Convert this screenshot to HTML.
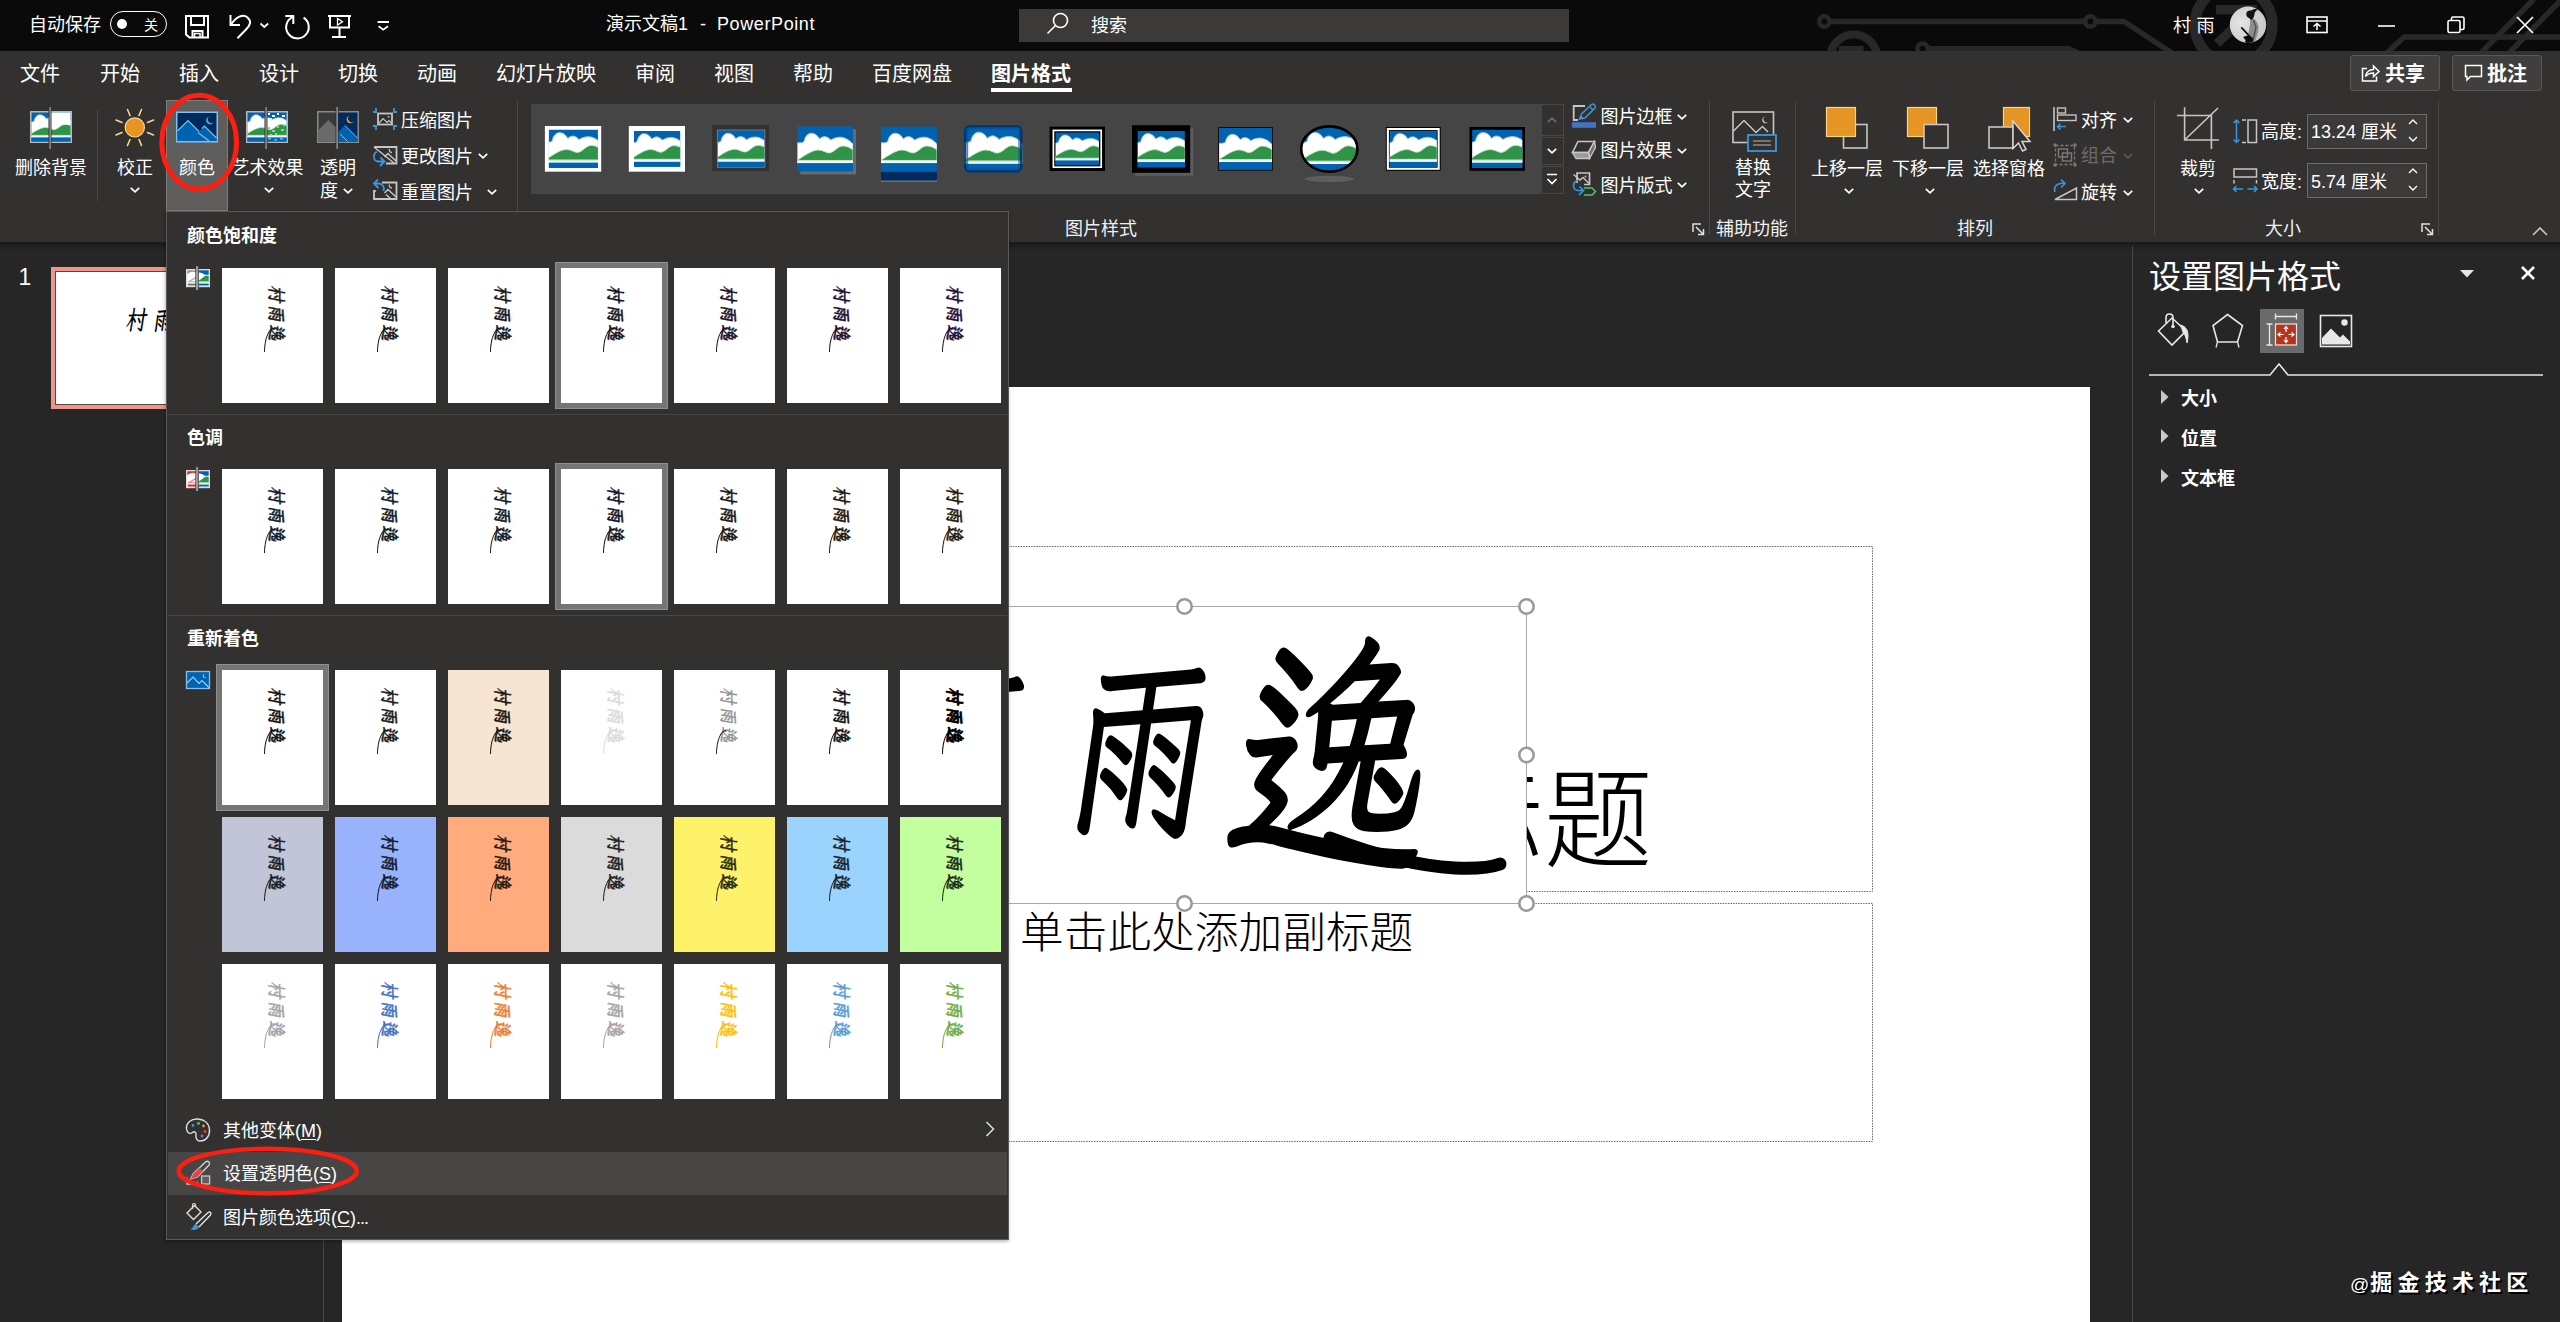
<!DOCTYPE html>
<html lang="zh-CN">
<head>
<meta charset="utf-8">
<title>演示文稿1 - PowerPoint</title>
<style>
*{box-sizing:border-box;margin:0;padding:0}
html,body{width:2560px;height:1322px;overflow:hidden;background:#262626}
body{position:relative;font-family:"Liberation Sans","Noto Sans CJK SC",sans-serif;color:#fff;font-size:18px;line-height:1}
.abs{position:absolute}
.t{position:absolute;white-space:nowrap;line-height:1;transform:translateY(calc(-50% + 1px))}
.tc{position:absolute;white-space:nowrap;line-height:1;transform:translate(-50%,calc(-50% + 1px))}
svg{position:absolute;overflow:visible}
#titlebar{position:absolute;left:0;top:0;width:2560px;height:51px;background:#0a0a0a;overflow:hidden}
#tabs{position:absolute;left:0;top:51px;width:2560px;height:46px;background:#323130}
#ribbon{position:absolute;left:0;top:97px;width:2560px;height:145px;background:#323130}
#ribshadow{position:absolute;left:0;top:242px;width:2560px;height:9px;background:linear-gradient(#191919,#262626)}
.tab{position:absolute;top:23px;font-size:20px;white-space:nowrap;line-height:1;transform:translateY(-50%);color:#fff}
.rl{position:absolute;white-space:nowrap;line-height:1;font-size:18px;transform:translate(-50%,calc(-50% + 1px));color:#fff}
.rs{position:absolute;white-space:nowrap;line-height:1;font-size:18px;transform:translateY(calc(-50% + 1px));color:#fff}
.gl{position:absolute;white-space:nowrap;line-height:1;font-size:18px;transform:translate(-50%,calc(-50% + 1px));color:#f0f0f0;top:228px}
.sep{position:absolute;width:1px;background:#4a4846;top:110px;height:91px}
.chev{position:absolute;width:11px;height:7px}
</style>
</head>
<body>
<div id="titlebar">
<svg width="2560" height="51" viewBox="0 0 2560 51" style="left:0;top:0" fill="none" stroke="#282828" stroke-width="5.500">
<path d="M1830 21.500H2085M2096 21.500H2124L2172 53"/>
<circle cx="1824.400" cy="21.500" r="5.200" stroke-width="4.500"/><circle cx="2090.400" cy="21.500" r="5.200" stroke-width="4.500"/>
<circle cx="1853.700" cy="58" r="23.500" stroke-width="8"/>
<rect x="1839" y="46" width="24.500" height="6" fill="#282828" stroke="none"/>
<circle cx="1922.600" cy="48.800" r="5.200" stroke-width="4.500"/><path d="M1928 48.800H2069L2078 53"/>
<circle cx="2233.600" cy="25" r="38.800" stroke-width="10.600"/>
<path d="M2216 9.600H2257M2253.500 9L2217 43.500" stroke-width="9.200"/>
<path d="M2386 54L2404 37H2560M2480 54L2534 -1M2508 54L2562 -1"/>
</svg>
<div class="t" style="left:29px;top:24px;font-size:18px">自动保存</div>
<div class="abs" style="left:110px;top:11px;width:57px;height:26px;border:1.5px solid #fff;border-radius:13px"></div>
<div class="abs" style="left:117px;top:19px;width:10px;height:10px;border-radius:5px;background:#fff"></div>
<div class="tc" style="left:151px;top:24px;font-size:14px">关</div>
<svg width="420" height="50" viewBox="0 0 420 50" style="left:0;top:0" fill="none" stroke="#fff" stroke-width="2">
<path d="M186 16H208V37.600H189.500L186 34.500Z"/><path d="M191 16V25H204V16M192.500 37.500V31H202.500V37.500"/><path d="M194.500 37V33.500H200V37" stroke-width="1.500"/>
<path d="M230.500 15V25H240"/><path d="M231 24.500C236 17 243 13.500 247.500 17.500C252 21.500 250 25.500 246 29.500L237.500 38.300"/>
<path d="M260.500 23.500L264.300 27L268.200 23.500" stroke-width="1.800"/>
<path d="M285.300 16H293.300V24"/><path d="M292.800 16.800A11.300 11.300 0 1 0 303.600 17.600"/>
<path d="M328 16H351M330 16V27.500H349V16M339.500 27.500V37M332 37H346"/><path d="M337.500 18.500V25L342.500 21.700Z" stroke-width="1.300"/>
<path d="M377.600 22H389M378.600 26.200L383.300 29.700L388 26.200" stroke-width="1.800"/>
</svg>
<div class="t" style="left:606px;top:23px;font-size:18px">演示文稿1</div><div class="t" style="left:700px;top:23px;font-size:18px">-</div><div class="t" style="left:717px;top:23px;font-size:18px;letter-spacing:0.600px">PowerPoint</div>
<div class="abs" style="left:1019px;top:9px;width:550px;height:33px;background:#3b3a39"></div>
<svg width="24" height="24" viewBox="0 0 24 24" style="left:1046px;top:12px" fill="none" stroke="#fff" stroke-width="1.6"><circle cx="14.500" cy="8.500" r="7"/><path d="M9.500 13.500L1.500 21.500"/></svg>
<div class="t" style="left:1091px;top:25px;font-size:18px">搜索</div>
<div class="t" style="left:2173px;top:25px;font-size:18px;letter-spacing:5.500px">村雨</div>
<svg width="40" height="40" viewBox="2228 4 40 40" style="left:2228px;top:4px"><defs><radialGradient id="av" cx="30%" cy="45%" r="80%"><stop offset="0" stop-color="#e4e4e4"/><stop offset="1" stop-color="#c4c4c4"/></radialGradient><clipPath id="avc"><circle cx="2248" cy="24.750" r="18.200"/></clipPath></defs><circle cx="2248" cy="24.750" r="18.200" fill="url(#av)"/><g clip-path="url(#avc)"><path d="M2252 17.500C2255.500 19 2258.500 23 2258.500 28C2258.500 33 2256 38 2254.500 43H2247.500C2249 38 2248 34 2249 30C2250 26 2250.500 22 2250 19Z" fill="#8c8c8c"/><path d="M2253.500 20L2256 27L2254 36L2252.500 43" stroke="#4a4a4a" stroke-width="1.200" fill="none"/><path d="M2246.300 14.500C2246 11.500 2248.500 10 2251 10.500C2253 9 2256 8.500 2258.500 9.500C2256 10.500 2254.500 12 2254.500 14C2254.500 16.500 2253 18.500 2251.500 20L2249 18C2247.500 17.500 2246.500 16.500 2246.300 14.500Z" fill="#141414"/><path d="M2241.300 27.400L2248.800 35.400" stroke="#0c0c0c" stroke-width="1.600"/><path d="M2243 37L2249 35L2253 38L2252.500 44H2245L2245.500 40Z" fill="#0c0c0c"/></g></svg>
<svg width="22" height="18" viewBox="0 0 22 18" style="left:2306px;top:16px" fill="none" stroke="#fff" stroke-width="1.6"><rect x="1" y="1" width="20" height="15.500"/><path d="M1 5H21M11 14V7.500M7.500 10.500L11 7.500L14.500 10.500"/></svg>
<svg width="18" height="4" viewBox="0 0 18 4" style="left:2378px;top:24px" stroke="#fff" stroke-width="1.6"><path d="M0 2H17"/></svg>
<svg width="18" height="18" viewBox="0 0 18 18" style="left:2447px;top:16px" fill="none" stroke="#fff" stroke-width="1.6"><rect x="1" y="4.500" width="12" height="12" rx="1.500"/><path d="M4.500 4.500V2.500Q4.500 1 6 1H15.500Q17 1 17 2.500V12Q17 13.500 15.500 13.500H13"/></svg>
<svg width="18" height="18" viewBox="0 0 18 18" style="left:2516px;top:16px" fill="none" stroke="#fff" stroke-width="1.7"><path d="M1 1L17 17M17 1L1 17"/></svg>
</div>
<div id="tabs">
<div class="tab" style="left:20px">文件</div>
<div class="tab" style="left:100px">开始</div>
<div class="tab" style="left:179px">插入</div>
<div class="tab" style="left:259px">设计</div>
<div class="tab" style="left:338px">切换</div>
<div class="tab" style="left:417px">动画</div>
<div class="tab" style="left:496px">幻灯片放映</div>
<div class="tab" style="left:635px">审阅</div>
<div class="tab" style="left:714px">视图</div>
<div class="tab" style="left:793px">帮助</div>
<div class="tab" style="left:872px">百度网盘</div>
<div class="tab" style="left:991px;font-weight:700">图片格式</div>
<div class="abs" style="left:991px;top:37px;width:81px;height:4px;background:#fff"></div>
<div class="abs" style="left:2350px;top:4px;width:90px;height:36px;background:#413f3e;border:1px solid #5a5857;border-radius:3px"></div>
<div class="abs" style="left:2452px;top:4px;width:90px;height:36px;background:#413f3e;border:1px solid #5a5857;border-radius:3px"></div>
<svg width="20" height="20" viewBox="0 0 20 20" style="left:2361px;top:12px" fill="none" stroke="#fff" stroke-width="1.500"><path d="M6 5.500H1.500V18H15.500V13.500"/><path d="M4.500 13.500C5.500 8.500 9 6.500 12.500 6.500V3L18 8.500L12.500 13.500V10C9.500 10 6.500 11 4.500 13.500Z"/></svg>
<div class="t" style="left:2385px;top:22px;font-size:20px;font-weight:700">共享</div>
<svg width="20" height="20" viewBox="0 0 20 20" style="left:2464px;top:13px" fill="none" stroke="#fff" stroke-width="1.500"><path d="M1.500 1.500H17.500V12.500H6.500L3 16V12.500H1.500Z"/></svg>
<div class="t" style="left:2487px;top:22px;font-size:20px;font-weight:700">批注</div>
</div>
<div id="ribbon"></div>
<div id="ribshadow"></div>
<svg width="0" height="0" style="left:0;top:0">
<defs>
<g id="picg"><rect width="56" height="45" fill="#0063b1"/>
<path d="M0 16.400C1.500 16.400 5.500 16.800 6.800 15C7.800 9.500 11 6.800 14.200 6.800C18 6.800 21 9.800 22.400 12.600C24 11 26 10.200 27.500 10.200C30.500 10.400 32.500 12.400 33.600 13.600C37 11.400 40.500 10.700 43.800 10.800C48.500 11.200 53 14 56 17.700V36.600H0Z" fill="#fff" stroke="#8fc3ee" stroke-width="0.900"/>
<path d="M0 33.800C7.500 29 15 23.700 21 23.600C26 23.500 29 26.800 32.300 26.500C37.500 25.800 40.500 19.500 46 19.500C50 19.600 53.500 21.500 56 23.500V34H0Z" fill="#2f9448" stroke="#bfe6c6" stroke-width="0.900"/>
<rect y="34.300" width="56" height="2.500" fill="#fff"/><rect y="33.900" width="56" height="0.800" fill="#bfe6c6"/>
<rect y="36.700" width="56" height="8.300" fill="#0063b1"/></g>
<symbol id="picf" viewBox="0 0 56 45" preserveAspectRatio="none"><use href="#picg"/></symbol>
<symbol id="pic" viewBox="3.500 4 49 38" preserveAspectRatio="none"><use href="#picg"/></symbol>
<symbol id="chv" viewBox="0 0 12 8"><path d="M1.800 1.800L6 5.900L10.200 1.800" fill="none" stroke="currentColor" stroke-width="1.700"/></symbol>
</defs>
</svg>
<!-- group: 调整 -->
<svg width="44" height="44" viewBox="29 106 44 44" style="left:29px;top:106px">
<rect x="30" y="111" width="42" height="32" fill="#b9b9b9"/>
<use href="#pic" x="31.500" y="112.500" width="39" height="29"/>
<rect x="51" y="112.500" width="19.500" height="12" fill="#fff"/>
<rect x="48.500" y="107" width="3" height="42" fill="#323130"/>
<rect x="49.500" y="107" width="1.200" height="42" fill="#a6a6a6"/>
</svg>
<div class="rl" style="left:51px;top:167px">删除背景</div>
<div class="sep" style="left:97px"></div>
<svg width="44" height="44" viewBox="113 105 44 44" style="left:113px;top:105px">
<g stroke="#f7d58a" stroke-width="1.600" stroke-linecap="round"><path d="M127.500 109.500L130 115.500M141.500 109.500L139 115.500M116 120L122 122.500M153.500 120L147.500 122.500M116 135L122 132.500M153.500 135L147.500 132.500M127.500 145.500L130 139.500M141.500 145.500L139 139.500"/></g>
<circle cx="134.800" cy="127.400" r="9.600" fill="#e59524" stroke="#f7d58a" stroke-width="1.200"/>
</svg>
<div class="rl" style="left:135px;top:167px">校正</div>
<svg class="chev" style="left:129px;top:186px;color:#fff"><use href="#chv" width="12" height="8"/></svg>
<div class="abs" style="left:166px;top:100px;width:62px;height:111px;background:#605e5c;border:1px solid #807e7c"></div>
<svg width="44" height="34" viewBox="175 110 44 34" style="left:175px;top:110px">
<rect x="176" y="111.500" width="42" height="31" fill="#83beec"/>
<rect x="177.500" y="113" width="39" height="28" fill="#002b5c"/>
<path d="M177.500 131L188 120.500L199 131.500L204.500 126L216.500 138V141H177.500Z" fill="#0063b1"/>
<path d="M177.500 131L188 120.500L199 131.500M198 132.500L209 141M202 128.500L204.500 126L216.500 138" fill="none" stroke="#83beec" stroke-width="1.100"/>
<path d="M209.500 116.500A4 4 0 1 0 213.500 122.500A3.500 3.500 0 0 1 209.500 116.500Z" fill="#4ea6ea"/>
</svg>
<div class="rl" style="left:197px;top:167px">颜色</div>
<svg width="44" height="44" viewBox="245 106 44 44" style="left:245px;top:106px">
<rect x="246" y="111" width="42" height="32" fill="#b9b9b9"/>
<use href="#pic" x="247.500" y="112.500" width="39" height="29"/>
<g fill="#fff"><rect x="268" y="113" width="2" height="2"/><rect x="272" y="115" width="3" height="2"/><rect x="277" y="113" width="2" height="2"/><rect x="282" y="115" width="3" height="2"/><rect x="270" y="118" width="2" height="1.500"/><rect x="280" y="118" width="2" height="2"/></g>
<g fill="#8fd49c"><rect x="268" y="127" width="2" height="2"/><rect x="272" y="130" width="3" height="2"/><rect x="277" y="126" width="2" height="2"/><rect x="281" y="129" width="3" height="2"/><rect x="275" y="133" width="2" height="2"/><rect x="283" y="124" width="2" height="2"/><rect x="270" y="134" width="2" height="1.500"/></g>
<g fill="#6fb4ee"><rect x="268" y="138" width="3" height="1.500"/><rect x="274" y="139" width="3" height="1.500"/><rect x="280" y="138" width="3" height="1.500"/></g>
<rect x="264.500" y="107" width="3" height="42" fill="#323130"/>
<rect x="265.500" y="107" width="1.200" height="42" fill="#a6a6a6"/>
</svg>
<div class="rl" style="left:267.500px;top:167px">艺术效果</div>
<svg class="chev" style="left:263px;top:186px;color:#fff"><use href="#chv" width="12" height="8"/></svg>
<svg width="44" height="44" viewBox="316 106 44 44" style="left:316px;top:106px">
<rect x="317" y="111" width="42" height="32" fill="#8a8a8a"/>
<rect x="318.500" y="112.500" width="18" height="29" fill="#3b3a39"/>
<path d="M318.500 130L328.500 120L336.500 128V141.500H318.500Z" fill="#6a6a6a"/>
<rect x="338" y="112.500" width="19.500" height="29" fill="#002b5c"/>
<path d="M338 132L345 125.500L357.500 138V141.500H338Z" fill="#0063b1"/>
<path d="M340 134L347.500 141.500M345 125.500L357.500 138" stroke="#83beec" stroke-width="1" fill="none"/>
<path d="M349.500 115.500A4 4 0 1 0 354 121.500A3.500 3.500 0 0 1 349.500 115.500Z" fill="#f2a33c"/>
<rect x="335.500" y="107" width="3" height="42" fill="#323130"/>
<rect x="336.500" y="107" width="1.200" height="42" fill="#a6a6a6"/>
</svg>
<div class="rl" style="left:338px;top:167px">透明</div>
<div class="rs" style="left:320px;top:190px">度</div>
<svg class="chev" style="left:342px;top:187px;color:#fff"><use href="#chv" width="12" height="8"/></svg>
<!-- small buttons -->
<svg width="26" height="24" viewBox="372 107 26 24" style="left:372px;top:107px" fill="none">
<rect x="378" y="113.500" width="14" height="11" stroke="#c8c6c4" stroke-width="1.800"/>
<path d="M379 123L383 118.500L387 122.500L389 120.500L391.500 123" stroke="#c8c6c4" stroke-width="1.200"/><circle cx="388.500" cy="116.800" r="0.900" fill="#c8c6c4"/>
<path d="M373 112H377M376 108V111.500M397 112H393M394 108V111.500M373 126H377M376 130V126.500M397 126H393M394 130V126.500" stroke="#3a96dd" stroke-width="1.800"/>
</svg>
<div class="rs" style="left:401px;top:119.500px">压缩图片</div>
<svg width="26" height="24" viewBox="372 145 26 24" style="left:372px;top:145px" fill="none">
<path d="M374 147H396.500V163.500H386" stroke="#c8c6c4" stroke-width="1.800"/>
<path d="M374 147L394 163M384.500 157L388 153.500L396 161" stroke="#c8c6c4" stroke-width="1.500"/>
<path d="M389.500 149A2.500 2.500 0 0 0 392 152.500" stroke="#c8c6c4" stroke-width="1.300"/>
<path d="M377 151.500C372.500 154 373 161 378 161.500H384M380.500 157.500L384.500 161.500L380 166" stroke="#3a96dd" stroke-width="1.800"/>
</svg>
<div class="rs" style="left:401px;top:155.500px">更改图片</div>
<svg class="chev" style="left:477px;top:152px;color:#fff"><use href="#chv" width="12" height="8"/></svg>
<svg width="26" height="24" viewBox="372 178 26 24" style="left:372px;top:178px" fill="none">
<path d="M382 182.500H396.500V199H374V190" stroke="#c8c6c4" stroke-width="1.800"/>
<path d="M374 192L376 190.500M384.500 193L388 189.500L396 197M386 194.500L391 199" stroke="#c8c6c4" stroke-width="1.500"/>
<path d="M389.500 184.500A2.500 2.500 0 0 0 392 188" stroke="#c8c6c4" stroke-width="1.300"/>
<path d="M378 179.500L374 183.500L378.500 188M374.500 183.500H379C383.500 184 384.500 188 383.500 191" stroke="#3a96dd" stroke-width="1.800"/>
</svg>
<div class="rs" style="left:401px;top:191.500px">重置图片</div>
<svg class="chev" style="left:486px;top:188px;color:#fff"><use href="#chv" width="12" height="8"/></svg>
<div class="sep" style="left:517px"></div>
<!-- gallery -->
<div class="abs" style="left:531px;top:104px;width:1010px;height:90px;background:#454545"></div>
<svg width="1010" height="90" viewBox="531 104 1010 90" style="left:531px;top:104px">
<rect x="544.900" y="126" width="56.300" height="45.700" fill="#fff"/><use href="#pic" x="548.900" y="129.800" width="49" height="38.200"/>
<rect x="628.800" y="126" width="56.200" height="45.700" fill="#fff"/><use href="#pic" x="634" y="131" width="46.200" height="35.800"/>
<rect x="712.200" y="125" width="56.800" height="46" fill="#323232"/><rect x="716.900" y="129.500" width="48.400" height="38.300" fill="#7a7672"/><use href="#pic" x="717.900" y="130.500" width="46.400" height="36.300"/>
<rect x="800.300" y="129.300" width="55.700" height="45.200" fill="#6a6a6a"/><use href="#picf" x="797.300" y="126.300" width="55.700" height="45.200"/>
<path d="M881 172H937V177.400Q937 181.400 933 181.400H885Q881 181.400 881 177.400Z" fill="#002b5c"/><rect x="881" y="180.600" width="56" height="1.200" fill="#808080"/>
<clipPath id="g5"><rect x="881" y="126.300" width="56" height="45.200" rx="4"/></clipPath><g clip-path="url(#g5)"><use href="#picf" x="881" y="126.300" width="56" height="45.200"/></g>
<clipPath id="g6"><rect x="963.900" y="125" width="58.600" height="47.600" rx="5.500"/></clipPath><g clip-path="url(#g6)"><use href="#picf" x="963.900" y="125" width="58.600" height="47.600"/></g><rect x="965.200" y="126.300" width="56" height="45" rx="4.500" fill="none" stroke="#003263" stroke-width="2.600" opacity="0.900"/><rect x="967.500" y="128.500" width="51.500" height="40.500" rx="3" fill="none" stroke="#0a4f96" stroke-width="1.400" opacity="0.700"/>
<rect x="1049.600" y="126.600" width="55.400" height="44.400" fill="#000"/><rect x="1053.400" y="130.400" width="47.800" height="36.800" fill="none" stroke="#fff" stroke-width="1.700"/><use href="#pic" x="1055.600" y="132.600" width="43.400" height="32.400"/>
<rect x="1135" y="128.200" width="58.200" height="47.600" fill="#5c5c5c"/><rect x="1132" y="125.200" width="58.200" height="47.600" fill="#000"/><use href="#pic" x="1137.700" y="130.900" width="47.100" height="36.300"/>
<rect x="1218" y="127" width="55" height="43.800" fill="#101010"/><use href="#picf" x="1219" y="128" width="53" height="41.800"/>
<ellipse cx="1329.200" cy="178.900" rx="24.600" ry="3.200" fill="#5e5e5e"/>
<clipPath id="g10"><ellipse cx="1329.300" cy="149" rx="28" ry="22.600"/></clipPath><g clip-path="url(#g10)"><use href="#picf" x="1300" y="125.200" width="58.700" height="47.600"/></g><ellipse cx="1329.300" cy="149" rx="28.100" ry="22.600" fill="none" stroke="#000" stroke-width="2.600"/>
<rect x="1385.800" y="127" width="54.900" height="43.800" fill="#000"/><rect x="1386.800" y="128" width="52.900" height="41.800" fill="#fff"/><rect x="1388.900" y="130.100" width="48.700" height="37.600" fill="#000"/><use href="#pic" x="1389.700" y="130.900" width="47.100" height="36"/>
<rect x="1469.500" y="127" width="55.500" height="43.800" fill="#000"/><use href="#pic" x="1472.200" y="129.700" width="50.100" height="38.400"/>
</svg>
<div class="abs" style="left:1541px;top:104px;width:23px;height:32px;border:1px solid #4a4846"></div>
<div class="abs" style="left:1541px;top:137px;width:23px;height:28px;border:1px solid #4a4846"></div>
<div class="abs" style="left:1541px;top:166px;width:23px;height:28px;border:1px solid #4a4846"></div>
<svg width="12" height="8" style="left:1546px;top:116px;color:#6e6e6e;transform:rotate(180deg)"><use href="#chv" width="12" height="8"/></svg>
<svg width="12" height="8" style="left:1546px;top:147px;color:#fff"><use href="#chv" width="12" height="8"/></svg>
<svg width="12" height="12" viewBox="0 0 12 12" style="left:1546px;top:173px" fill="none" stroke="#fff" stroke-width="1.700"><path d="M1 1.500H11M1.500 6L6 10.500L10.500 6"/></svg>
<!-- picture border/effects/layout -->
<svg width="26" height="26" viewBox="1571 103 26 26" style="left:1571px;top:103px" fill="none">
<path d="M1585 106H1573.700V120H1578" stroke="#c8c6c4" stroke-width="1.800"/>
<rect x="1572" y="122.200" width="24" height="5.600" fill="#4472c4"/>
<path d="M1579.500 119L1581.500 114L1591.500 104.500Q1593 103.500 1594.500 105Q1596 106.500 1595 108L1585 118Z" stroke="#3a96dd" stroke-width="1.500"/><path d="M1579.500 119L1581 115.500L1583.500 118Z" fill="#3a96dd"/><path d="M1589.500 106.500L1593 110" stroke="#3a96dd" stroke-width="1.300"/>
</svg>
<div class="rs" style="left:1600.500px;top:116px">图片边框</div>
<svg class="chev" style="left:1676px;top:113px;color:#fff"><use href="#chv" width="12" height="8"/></svg>
<svg width="26" height="22" viewBox="1571 139 26 22" style="left:1571px;top:139px" fill="none">
<path d="M1578 141.500H1594.500L1588.500 152.500H1572.500Z" stroke="#c8c6c4" stroke-width="1.600"/>
<path d="M1594.500 141.500L1595.500 147.500L1589.500 158.500L1588.500 152.500Z" fill="#6e6e6e" stroke="#c8c6c4" stroke-width="1.400"/>
<path d="M1572.500 152.500H1588.500L1589.500 158.500H1576Z" fill="#9a9a9a" stroke="#c8c6c4" stroke-width="1.400"/>
</svg>
<div class="rs" style="left:1600.500px;top:150px">图片效果</div>
<svg class="chev" style="left:1676px;top:147px;color:#fff"><use href="#chv" width="12" height="8"/></svg>
<svg width="26" height="26" viewBox="1571 171 26 26" style="left:1571px;top:171px" fill="none">
<path d="M1577 183V173H1589.500V184.500H1584" stroke="#c8c6c4" stroke-width="1.700"/>
<path d="M1573.500 174.500L1580 180L1583 177.500L1589 183.500" stroke="#c8c6c4" stroke-width="1.400"/><circle cx="1585.500" cy="176.500" r="0.900" fill="#c8c6c4"/>
<path d="M1577 180.500C1572 183 1572.500 190 1578 190.500H1583M1579.500 186.500L1583.500 190.500L1579 195" stroke="#3a96dd" stroke-width="1.700"/>
<path d="M1584 188H1592L1595.500 191.500L1592 195H1584" stroke="#4fc36b" stroke-width="1.500"/>
</svg>
<div class="rs" style="left:1600.500px;top:184.500px">图片版式</div>
<svg class="chev" style="left:1676px;top:181px;color:#fff"><use href="#chv" width="12" height="8"/></svg>
<div class="gl" style="left:1101px">图片样式</div>
<svg width="13" height="13" viewBox="0 0 13 13" style="left:1692px;top:223px" fill="none" stroke="#e0e0e0" stroke-width="1.500"><path d="M9 1H1V9"/><path d="M4 4L11.500 11.500M6 11.500H11.500V6"/></svg>
<div class="sep" style="left:1709px;top:101px;height:134px"></div>
<!-- alt text -->
<svg width="48" height="44" viewBox="1731 109 48 44" style="left:1731px;top:109px" fill="none">
<rect x="1733" y="112" width="40.500" height="30.500" stroke="#c8c6c4" stroke-width="1.600"/>
<path d="M1733.500 131L1744 120.500L1756 132.500L1762.500 126.500L1768 132" stroke="#c8c6c4" stroke-width="1.500"/>
<path d="M1765 116.500A3.500 3.500 0 1 0 1768.500 122A3 3 0 0 1 1765 116.500Z" fill="#c8c6c4"/>
<rect x="1748" y="135" width="28" height="16" fill="#323130" stroke="#3a96dd" stroke-width="1.800"/>
<path d="M1753 141H1771M1753 145H1771" stroke="#8a8a8a" stroke-width="1.300"/>
</svg>
<div class="rl" style="left:1753px;top:167px">替换</div>
<div class="rl" style="left:1753px;top:189px">文字</div>
<div class="gl" style="left:1752px">辅助功能</div>
<div class="sep" style="left:1795px;top:101px;height:134px"></div>
<!-- arrange -->
<svg width="44" height="44" viewBox="1825 106 44 44" style="left:1825px;top:106px" fill="none">
<rect x="1843.500" y="124.500" width="23.500" height="23.500" stroke="#c8c6c4" stroke-width="1.600"/>
<rect x="1826.500" y="107.500" width="29" height="29" fill="#e59524" stroke="#fcd77f" stroke-width="1.200"/>
</svg>
<div class="rl" style="left:1847px;top:167.500px">上移一层</div>
<svg class="chev" style="left:1843px;top:187px;color:#fff"><use href="#chv" width="12" height="8"/></svg>
<svg width="44" height="44" viewBox="1906 106 44 44" style="left:1906px;top:106px" fill="none">
<rect x="1907.500" y="107.500" width="29" height="29" fill="#e59524" stroke="#fcd77f" stroke-width="1.200"/>
<rect x="1924" y="124.500" width="24" height="23.500" fill="#323130" stroke="#c8c6c4" stroke-width="1.600"/>
</svg>
<div class="rl" style="left:1928px;top:167.500px">下移一层</div>
<svg class="chev" style="left:1924px;top:187px;color:#fff"><use href="#chv" width="12" height="8"/></svg>
<svg width="46" height="46" viewBox="1987 105 46 46" style="left:1987px;top:105px" fill="none">
<rect x="2003.500" y="107.500" width="26" height="29" fill="#e59524" stroke="#fcd77f" stroke-width="1.200"/>
<rect x="1989" y="127" width="24" height="21" fill="#323130" stroke="#c8c6c4" stroke-width="1.600"/>
<path d="M2013 121V148.500L2018.500 143L2022.500 151L2026 149.300L2022 141.500H2030Z" fill="#323130" stroke="#d8d6d4" stroke-width="1.500" stroke-linejoin="miter"/>
</svg>
<div class="rl" style="left:2009px;top:167.500px">选择窗格</div>
<svg width="26" height="26" viewBox="2052 106 26 26" style="left:2052px;top:106px" fill="none">
<path d="M2054 107V131" stroke="#c8c6c4" stroke-width="1.600"/>
<rect x="2057.500" y="108" width="8" height="5" stroke="#c8c6c4" stroke-width="1.400"/><rect x="2057.500" y="115" width="18.500" height="5.500" stroke="#c8c6c4" stroke-width="1.400"/>
<path d="M2066 126.500H2057.500M2060.500 123.500L2057.500 126.500L2060.500 129.500" stroke="#3a96dd" stroke-width="1.500"/>
</svg>
<div class="rs" style="left:2081px;top:119.500px">对齐</div>
<svg class="chev" style="left:2122px;top:116px;color:#fff"><use href="#chv" width="12" height="8"/></svg>
<svg width="26" height="26" viewBox="2052 142 26 26" style="left:2052px;top:142px" fill="none" stroke="#7c7a78">
<rect x="2055.500" y="145.500" width="19" height="19" stroke-width="1.300" stroke-dasharray="3 2"/>
<rect x="2058.500" y="149" width="9" height="8" stroke-width="1.400"/><rect x="2062.500" y="153" width="9" height="8" stroke-width="1.400"/>
<g fill="#7c7a78" stroke="none"><rect x="2053.500" y="143.500" width="3" height="3"/><rect x="2073.500" y="143.500" width="3" height="3"/><rect x="2053.500" y="163.500" width="3" height="3"/><rect x="2073.500" y="163.500" width="3" height="3"/></g>
</svg>
<div class="rs" style="left:2081px;top:155px;color:#6e6c6a">组合</div>
<svg class="chev" style="left:2122px;top:152px;color:#5e5c5a"><use href="#chv" width="12" height="8"/></svg>
<svg width="26" height="26" viewBox="2052 176 26 26" style="left:2052px;top:176px" fill="none">
<path d="M2055 199.500H2076.500V188Z" stroke="#c8c6c4" stroke-width="1.500"/>
<path d="M2055 192C2053 186 2058 182.500 2064.500 183.500M2061 179.500L2065 183.500L2061 187.500" stroke="#3a96dd" stroke-width="1.600"/>
</svg>
<div class="rs" style="left:2081px;top:192px">旋转</div>
<svg class="chev" style="left:2122px;top:189px;color:#fff"><use href="#chv" width="12" height="8"/></svg>
<div class="gl" style="left:1975px">排列</div>
<div class="sep" style="left:2154px;top:101px;height:134px"></div>
<!-- size group -->
<svg width="44" height="44" viewBox="2176 106 44 44" style="left:2176px;top:106px" fill="none" stroke="#c8c6c4" stroke-width="1.600">
<path d="M2184.600 107.300V140H2219M2177 115.500H2211.400V149M2184.600 140L2218 108"/>
</svg>
<div class="rl" style="left:2198px;top:167.500px">裁剪</div>
<svg class="chev" style="left:2193px;top:187px;color:#fff"><use href="#chv" width="12" height="8"/></svg>
<svg width="26" height="26" viewBox="2232 118 26 26" style="left:2232px;top:118px" fill="none">
<path d="M2236.500 120V142.500M2233.500 123L2236.500 120L2239.500 123M2233.500 139.500L2236.500 142.500L2239.500 139.500" stroke="#3a96dd" stroke-width="1.500"/>
<rect x="2248" y="120" width="8.500" height="22.500" stroke="#c8c6c4" stroke-width="1.500"/>
<path d="M2242 120H2246M2242 142.500H2246" stroke="#c8c6c4" stroke-width="1.500"/>
</svg>
<div class="rs" style="left:2261px;top:131px">高度:</div>
<div class="abs" style="left:2307px;top:114px;width:120px;height:35px;background:#3b3a39;border:1px solid #6e6c6a"></div>
<div class="rs" style="left:2311px;top:131px">13.24 厘米</div>
<svg width="10" height="6" viewBox="0 0 10 6" style="left:2408px;top:119px" fill="none" stroke="#fff" stroke-width="1.400"><path d="M1 5L5 1L9 5"/></svg>
<svg width="10" height="6" viewBox="0 0 10 6" style="left:2408px;top:136px" fill="none" stroke="#fff" stroke-width="1.400"><path d="M1 1L5 5L9 1"/></svg>
<svg width="26" height="26" viewBox="2232 167 26 26" style="left:2232px;top:167px" fill="none">
<rect x="2234" y="169" width="22.500" height="8" stroke="#c8c6c4" stroke-width="1.500"/>
<path d="M2234 180V183.500M2256.500 180V183.500" stroke="#c8c6c4" stroke-width="1.500"/>
<path d="M2233.500 189H2243M2247.500 189H2257M2236.500 186L2233.500 189L2236.500 192M2254 186L2257 189L2254 192" stroke="#3a96dd" stroke-width="1.500"/>
</svg>
<div class="rs" style="left:2261px;top:180.500px">宽度:</div>
<div class="abs" style="left:2307px;top:163px;width:120px;height:35px;background:#3b3a39;border:1px solid #6e6c6a"></div>
<div class="rs" style="left:2311px;top:180.500px">5.74 厘米</div>
<svg width="10" height="6" viewBox="0 0 10 6" style="left:2408px;top:168px" fill="none" stroke="#fff" stroke-width="1.400"><path d="M1 5L5 1L9 5"/></svg>
<svg width="10" height="6" viewBox="0 0 10 6" style="left:2408px;top:185px" fill="none" stroke="#fff" stroke-width="1.400"><path d="M1 1L5 5L9 1"/></svg>
<div class="gl" style="left:2283px">大小</div>
<svg width="13" height="13" viewBox="0 0 13 13" style="left:2421px;top:223px" fill="none" stroke="#e0e0e0" stroke-width="1.500"><path d="M9 1H1V9"/><path d="M4 4L11.500 11.500M6 11.500H11.500V6"/></svg>
<div class="sep" style="left:2438px;top:101px;height:134px"></div>
<svg width="16" height="10" viewBox="0 0 16 10" style="left:2532px;top:226px" fill="none" stroke="#c8c6c4" stroke-width="1.600"><path d="M1 9L8 2L15 9"/></svg>
<div class="sep" style="left:517px;top:101px;height:134px"></div>
<!-- slide panel -->
<div class="abs" style="left:323px;top:246px;width:1px;height:1076px;background:#454545"></div>
<div class="tc" style="left:25px;top:275.500px;font-size:23px;color:#fff">1</div>
<div class="abs" style="left:51px;top:267px;width:246px;height:142px;background:#f1948a"></div>
<div class="abs" style="left:55px;top:271px;width:238px;height:134px;background:#fff;border:1px solid #4a4a4a"></div>
<div class="abs" style="left:56px;top:272px;width:1748px;height:984px;transform-origin:0 0;transform:scale(0.134400);overflow:hidden;font:700 200px/1 'LXGW WenKai TC','Noto Serif CJK SC',serif;color:#000">
<span class="abs" style="left:500px;top:219px;white-space:nowrap;transform-origin:0 0;transform:translate(43.400px,34px) scale(0.757,1) skewX(-12deg)">村</span>
<span class="abs" style="left:500px;top:219px;white-space:nowrap;transform-origin:0 0;transform:translate(245.100px,35.400px) scale(0.720,1.024) skewX(-12deg)">雨</span>
<span class="abs" style="left:500px;top:219px;white-space:nowrap;transform-origin:0 0;transform:translate(413.200px,18px) scale(1.043,1.298) skewX(-12deg)">逸</span>
</div>
<!-- slide -->
<div class="abs" style="left:342px;top:387px;width:1748px;height:935px;background:#fff"></div>
<svg width="1320" height="600" viewBox="558 546 1320 600" style="left:558px;top:546px" fill="none" stroke="#6a6a6a" stroke-width="1" stroke-dasharray="1.500 1.100"><rect x="560.500" y="546.500" width="1312" height="345"/><rect x="560.500" y="903.500" width="1312" height="238"/></svg>
<div class="tc" style="left:1216.700px;top:820px;font-size:109px;color:#000;font-weight:300;font-family:'Liberation Sans','Noto Sans CJK SC',sans-serif">单击此处添加标题</div>
<div class="tc" style="left:1216.700px;top:931.500px;font-size:43.700px;color:#000;font-weight:300">单击此处添加副标题</div>
<!-- picture -->
<div class="abs" style="left:842px;top:606px;width:684px;height:297px;background:#fff"></div>
<div id="callig" class="abs" style="left:842px;top:606px;width:684px;height:297px;overflow:hidden;font:700 200px/1 'LXGW WenKai TC','Noto Serif CJK SC',serif;color:#000">
<span class="abs" style="left:0;top:0;white-space:nowrap;transform-origin:0 0;transform:translate(43.400px,10px) scale(0.757,1) skewX(-12deg)">村</span>
<span class="abs" style="left:0;top:0;white-space:nowrap;transform-origin:0 0;transform:translate(245.100px,35.400px) scale(0.720,1.024) skewX(-12deg)">雨</span>
<span class="abs" style="left:0;top:0;white-space:nowrap;transform-origin:0 0;transform:translate(413.200px,18px) scale(1.043,1.298) skewX(-12deg)">逸</span>
<svg width="684" height="297" viewBox="842 606 684 297" style="left:0;top:0" fill="none" stroke="#000" stroke-linecap="round"><path d="M1330 838C1380 857 1420 866 1455 868C1478 869 1492 867 1500 864" stroke-width="13"/></svg>
</div>
<svg width="700" height="320" viewBox="834 596 700 320" style="left:834px;top:596px" fill="none">
<rect x="842.500" y="606.500" width="684" height="297" stroke="#a8a8a8" stroke-width="1"/>
<g fill="#fff" stroke="#9a9a9a" stroke-width="2.600"><circle cx="842.500" cy="606.500" r="7.200"/><circle cx="1184.500" cy="606.500" r="7.200"/><circle cx="1526.500" cy="606.500" r="7.200"/><circle cx="842.500" cy="755" r="7.200"/><circle cx="1526.500" cy="755" r="7.200"/><circle cx="842.500" cy="903.500" r="7.200"/><circle cx="1184.500" cy="903.500" r="7.200"/><circle cx="1526.500" cy="903.500" r="7.200"/></g>
</svg>
<!-- right pane -->
<div class="abs" style="left:2132px;top:246px;width:1px;height:1076px;background:#454545"></div>
<div class="t" style="left:2149px;top:276px;font-size:32px;color:#fff">设置图片格式</div>
<svg width="14" height="8" viewBox="0 0 14 8" style="left:2460px;top:270px"><path d="M0 0H14L7 7.500Z" fill="#e6e6e6"/></svg>
<svg width="14" height="14" viewBox="0 0 14 14" style="left:2521px;top:266px" stroke="#fff" stroke-width="2.600"><path d="M1 1L13 13M13 1L1 13"/></svg>
<div class="abs" style="left:2260px;top:309px;width:44px;height:44px;background:#6a6a6a"></div>
<svg width="400" height="50" viewBox="2150 306 400 50" style="left:2150px;top:306px" fill="none" stroke="#e8e8e8" stroke-width="1.600">
<path d="M2158.500 331L2172 318L2186 331L2172 345Z"/><path d="M2166 323V317.500Q2166 314 2169.500 314Q2173 314 2173 317.500V326"/><circle cx="2173" cy="326.500" r="1.800" fill="#e8e8e8" stroke="none"/><path d="M2180 325C2186 326 2190 331 2187 343C2186 337 2185 334 2182.500 332" fill="#e8e8e8" stroke-width="1"/>
<path d="M2227.500 314.500L2242.500 325.500L2237.500 342H2217.500L2213 325.500Z"/><path d="M2217.500 342L2216 347.500M2237.500 342L2239 347.500" stroke-width="1.300"/>
<path d="M2275.500 316.500H2296.500M2275.500 313.500V319.500M2296.500 313.500V319.500M2269.500 324V345M2266.500 324H2272.500M2266.500 345H2272.500" stroke-width="1.300"/>
<rect x="2275.500" y="324" width="21" height="21" fill="#b7341c" stroke="#e8e8e8" stroke-width="1.200"/>
<path d="M2286 326.500V332M2286 337V342.500M2278 334.500H2283.500M2288.500 334.500H2294M2284 329L2286 326.500L2288 329M2284 340L2286 342.500L2288 340M2280.500 332.500L2278 334.500L2280.500 336.500M2291.500 332.500L2294 334.500L2291.500 336.500" stroke="#fff" stroke-width="1.200"/>
<rect x="2320.500" y="315.500" width="31" height="31" stroke-width="1.600"/><path d="M2322 344.500V338L2331 328.500L2340 337.500L2343 334.500L2350 341.500V344.500Z" fill="#e8e8e8" stroke="none"/><circle cx="2344.500" cy="322.500" r="3.200" fill="#e8e8e8" stroke="none"/>
</svg>
<svg width="396" height="14" viewBox="2149 362 396 14" style="left:2149px;top:362px" fill="none" stroke="#e6e6e6" stroke-width="1.600"><path d="M2149 375H2270L2279 364L2288 375H2543"/></svg>
<svg width="8" height="14" viewBox="0 0 8 14" style="left:2161px;top:390px"><path d="M0 0L7.500 7L0 14Z" fill="#c8c8c8"/></svg>
<div class="t" style="left:2181px;top:398px;font-size:18px;font-weight:700">大小</div>
<svg width="8" height="14" viewBox="0 0 8 14" style="left:2161px;top:429px"><path d="M0 0L7.500 7L0 14Z" fill="#c8c8c8"/></svg>
<div class="t" style="left:2181px;top:437.500px;font-size:18px;font-weight:700">位置</div>
<svg width="8" height="14" viewBox="0 0 8 14" style="left:2161px;top:469px"><path d="M0 0L7.500 7L0 14Z" fill="#c8c8c8"/></svg>
<div class="t" style="left:2181px;top:477.500px;font-size:18px;font-weight:700">文本框</div>
<div class="t" style="left:2350px;top:1281.500px;font-size:22px;font-weight:700;letter-spacing:5.200px;color:#fff;text-shadow:2px 2px 0 #000,1px 1px 0 #000"><span style="font-size:19px;letter-spacing:1px;font-weight:400;position:relative;top:1px">@</span>掘金技术社区</div>
<!-- color dropdown -->
<div class="abs" style="left:166px;top:211px;width:843px;height:1029px;background:#323130;border:1px solid #5c5a58;box-shadow:0 2px 3px rgba(0,0,0,0.220),-2px 0 3px rgba(0,0,0,0.100)"></div>
<style>.sw{position:absolute;width:101px;height:135px;overflow:hidden}.sw b{position:absolute;left:67px;top:21px;font:700 19px/24px "LXGW WenKai TC","Noto Serif CJK SC",serif;white-space:nowrap;transform-origin:0 0;transform:rotate(90deg) scale(0.860,1) skewX(-12deg);letter-spacing:3.500px;-webkit-text-stroke:0.450px currentColor}.sw i{position:absolute;left:42px;top:60px;width:10px;height:24px;border-left:1.600px solid currentColor;border-top:1.600px solid currentColor;border-radius:10px 0 0 0/24px 0 0 0;border-right:0;border-bottom:0}.sel{position:absolute;width:113px;height:147px;background:#757575;border:1px solid #8f8f8f}.dh{position:absolute;left:187px;font-size:18px;font-weight:700;line-height:1;white-space:nowrap;transform:translateY(calc(-50% + 1px));color:#fff}.mi{position:absolute;left:223px;font-size:18px;line-height:1;white-space:nowrap;transform:translateY(calc(-50% + 1px));color:#fff}.mi u{text-decoration-thickness:1px;text-underline-offset:2px}</style>
<div class="dh" style="top:235px">颜色饱和度</div>
<div class="abs" style="left:168px;top:414px;width:839px;height:1px;background:#484644"></div>
<div class="dh" style="top:437px">色调</div>
<div class="abs" style="left:168px;top:615px;width:839px;height:1px;background:#484644"></div>
<div class="dh" style="top:638px">重新着色</div>
<div class="sel" style="left:555px;top:262px"></div>
<div class="sel" style="left:555px;top:463px"></div>
<div class="sel" style="left:216px;top:664px"></div>
<div class="sw" style="left:222px;top:268px;background:#fff;color:#1a1a1a"><b>村雨逸</b><i></i></div>
<div class="sw" style="left:335px;top:268px;background:#fff;color:#16161a"><b>村雨逸</b><i></i></div>
<div class="sw" style="left:448px;top:268px;background:#fff;color:#14141c"><b>村雨逸</b><i></i></div>
<div class="sw" style="left:561px;top:268px;background:#fff;color:#12121e"><b>村雨逸</b><i></i></div>
<div class="sw" style="left:674px;top:268px;background:#fff;color:#181028"><b>村雨逸</b><i></i></div>
<div class="sw" style="left:787px;top:268px;background:#fff;color:#1a0e30"><b>村雨逸</b><i></i></div>
<div class="sw" style="left:900px;top:268px;background:#fff;color:#1e0c38"><b>村雨逸</b><i></i></div>
<div class="sw" style="left:222px;top:469px;background:#fff;color:#0e1a2a"><b>村雨逸</b><i></i></div>
<div class="sw" style="left:335px;top:469px;background:#fff;color:#101a26"><b>村雨逸</b><i></i></div>
<div class="sw" style="left:448px;top:469px;background:#fff;color:#121a22"><b>村雨逸</b><i></i></div>
<div class="sw" style="left:561px;top:469px;background:#fff;color:#12121e"><b>村雨逸</b><i></i></div>
<div class="sw" style="left:674px;top:469px;background:#fff;color:#1a1610"><b>村雨逸</b><i></i></div>
<div class="sw" style="left:787px;top:469px;background:#fff;color:#20160c"><b>村雨逸</b><i></i></div>
<div class="sw" style="left:900px;top:469px;background:#fff;color:#261808"><b>村雨逸</b><i></i></div>
<div class="sw" style="left:222px;top:670px;background:#fff;color:#111"><b>村雨逸</b><i></i></div>
<div class="sw" style="left:335px;top:670px;background:#fff;color:#1c1c1c"><b>村雨逸</b><i></i></div>
<div class="sw" style="left:448px;top:670px;background:#f6e5d3;color:#1a140e"><b>村雨逸</b><i></i></div>
<div class="sw" style="left:561px;top:670px;background:#fff;color:#dcdcdc"><b>村雨逸</b><i></i></div>
<div class="sw" style="left:674px;top:670px;background:#fff;color:#222"><b style="opacity:.5;font-weight:400">村雨逸</b><i></i></div>
<div class="sw" style="left:787px;top:670px;background:#fff;color:#111"><b>村雨逸</b><i></i></div>
<div class="sw" style="left:900px;top:670px;background:#fff;color:#000"><b style="-webkit-text-stroke:1px currentColor">村雨逸</b><i></i></div>
<div class="sw" style="left:222px;top:817px;background:#c0c6d8;color:#1a1c22"><b>村雨逸</b><i></i></div>
<div class="sw" style="left:335px;top:817px;background:#98b3fb;color:#141a2c"><b>村雨逸</b><i></i></div>
<div class="sw" style="left:448px;top:817px;background:#ffab7d;color:#2a1810"><b>村雨逸</b><i></i></div>
<div class="sw" style="left:561px;top:817px;background:#dbdbdb;color:#202020"><b>村雨逸</b><i></i></div>
<div class="sw" style="left:674px;top:817px;background:#fff26b;color:#2a2810"><b>村雨逸</b><i></i></div>
<div class="sw" style="left:787px;top:817px;background:#9bd3ff;color:#14222c"><b>村雨逸</b><i></i></div>
<div class="sw" style="left:900px;top:817px;background:#c3ff9f;color:#1a2a14"><b>村雨逸</b><i></i></div>
<div class="sw" style="left:222px;top:964px;background:#fff;color:#a5a5a5"><b>村雨逸</b><i></i></div>
<div class="sw" style="left:335px;top:964px;background:#fff;color:#4472c4"><b>村雨逸</b><i></i></div>
<div class="sw" style="left:448px;top:964px;background:#fff;color:#ed7d31"><b>村雨逸</b><i></i></div>
<div class="sw" style="left:561px;top:964px;background:#fff;color:#a5a5a5"><b>村雨逸</b><i></i></div>
<div class="sw" style="left:674px;top:964px;background:#fff;color:#ffc000"><b>村雨逸</b><i></i></div>
<div class="sw" style="left:787px;top:964px;background:#fff;color:#5b9bd5"><b>村雨逸</b><i></i></div>
<div class="sw" style="left:900px;top:964px;background:#fff;color:#70ad47"><b>村雨逸</b><i></i></div>
<svg width="28" height="26" viewBox="184 265 28 26" style="left:184px;top:265px"><rect x="186" y="269" width="24" height="18.200" fill="#dedede"/><rect x="187.300" y="270.3" width="9" height="15.600" fill="#fff"/><path d="M187.300 270.3H196.300V272.6C193 271.2 189.500 271.6 187.300 274.5Z" fill="#9a9a9a"/><path d="M187.800 281.6L196 276.6V278.2L191 281.2H196V282.2H187.800Z" fill="#b4b4b4"/><rect x="187.800" y="283.6" width="8.500" height="1.900" fill="#6e6e6e"/><rect x="198.700" y="270.3" width="10" height="15.600" fill="#fff"/><path d="M198.700 270.3H208.700V274.8H205C203 273.5 201 272.2 198.700 272.6Z" fill="#0063b1"/><path d="M198.700 280.2C202 278.8 204 275.6 206.500 275.4C207.500 275.4 208.200 275.8 208.700 276.2V281.8H198.700Z" fill="#2f9448"/><rect x="198.700" y="281.4" width="10" height="1.200" fill="#bfe6c6"/><rect x="198.700" y="283.6" width="10" height="1.900" fill="#0063b1"/><rect x="195.400" y="268" width="3.400" height="20" fill="#323130"/><rect x="196" y="266.2" width="2.200" height="23.800" fill="#9a9a9a"/></svg>
<svg width="28" height="26" viewBox="184 466 28 26" style="left:184px;top:466px"><rect x="186" y="470" width="24" height="18.200" fill="#dedede"/><rect x="187.300" y="471.3" width="9" height="15.600" fill="#fff"/><path d="M187.300 471.3H196.300V473.6C193 472.2 189.500 472.6 187.300 475.5Z" fill="#e02a20"/><path d="M187.800 482.6L196 477.6V479.2L191 482.2H196V483.2H187.800Z" fill="#f08a8c"/><rect x="187.800" y="484.6" width="8.500" height="1.900" fill="#dc2010"/><rect x="198.700" y="471.3" width="10" height="15.600" fill="#fff"/><path d="M198.700 471.3H208.700V475.8H205C203 474.5 201 473.2 198.700 473.6Z" fill="#0063b1"/><path d="M198.700 481.2C202 479.8 204 476.6 206.500 476.4C207.500 476.4 208.200 476.8 208.700 477.2V482.8H198.700Z" fill="#2f9448"/><rect x="198.700" y="482.4" width="10" height="1.200" fill="#bfe6c6"/><rect x="198.700" y="484.6" width="10" height="1.900" fill="#0063b1"/><rect x="195.400" y="469" width="3.400" height="20" fill="#323130"/><rect x="196" y="467.2" width="2.200" height="23.800" fill="#9a9a9a"/></svg>
<svg width="26" height="20" viewBox="185 669 26 20" style="left:185px;top:669px"><rect x="186.500" y="671.500" width="23" height="17" fill="#0063b1" stroke="#83beec" stroke-width="1.300"/><path d="M187 683L193 677L199 683.500L202 680.500L209 687.500" fill="none" stroke="#9cd0f5" stroke-width="1.200"/><path d="M204.500 673.500A2.300 2.300 0 1 0 207 677A2 2 0 0 1 204.500 673.500Z" fill="#bfe0fa"/></svg>
<div class="abs" style="left:168px;top:1152px;width:839px;height:43px;background:#484644"></div>
<svg width="26" height="26" viewBox="185 1117 26 26" style="left:185px;top:1117px" fill="none" stroke="#e0e0e0" stroke-width="1.400"><path d="M198 1119C191 1118.500 186 1123 186.500 1129C187 1133 190 1134.500 192.500 1132.500C194.500 1131 196.500 1132 196 1135C195.500 1138 197 1141 200 1141C206 1141 210 1136 209.500 1129.500C209 1123.500 204.500 1119.500 198 1119Z"/><circle cx="193" cy="1125.500" r="1.400" fill="#3a96dd" stroke="none"/><circle cx="198.500" cy="1123.500" r="1.400" fill="#4fc36b" stroke="none"/><circle cx="203.500" cy="1126" r="1.400" fill="#e59524" stroke="none"/><circle cx="205" cy="1131.500" r="1.400" fill="#e8414a" stroke="none"/><circle cx="202" cy="1136" r="1.400" fill="#b05ad8" stroke="none"/></svg>
<div class="mi" style="top:1130px">其他变体(<u>M</u>)</div>
<svg width="10" height="16" viewBox="0 0 10 16" style="left:985px;top:1121px" fill="none" stroke="#e0e0e0" stroke-width="1.500"><path d="M1.500 1L8.500 8L1.500 15"/></svg>
<svg width="28" height="28" viewBox="184 1160 28 28" style="left:184px;top:1160px" fill="none"><path d="M187 1177.500V1184H192.500M195 1184H197.500V1181.500" stroke="#c8c6c4" stroke-width="1.400"/><rect x="201.600" y="1176" width="8" height="8" fill="#5e5e5e" stroke="#c8c6c4" stroke-width="1.300"/><path d="M190.500 1179L193.500 1173.500L205.500 1162Q207.500 1160.500 209 1162Q210.300 1163.500 208.800 1165.300L197.500 1177Z" fill="#484644" stroke="#d6d6d6" stroke-width="1.300"/><path d="M190.500 1179L193.500 1173.500L199.500 1167.800L202.800 1171.200L197.500 1177Z" fill="#e8414a"/></svg>
<div class="mi" style="top:1173px">设置透明色(<u>S</u>)</div>
<svg width="28" height="28" viewBox="184 1203 28 28" style="left:184px;top:1203px" fill="none"><path d="M187 1213L194.500 1205.500L201 1212L193.500 1219.500Z" stroke="#e0e0e0" stroke-width="1.400"/><path d="M192.500 1209V1205Q192.500 1203.500 194 1203.500Q195.500 1203.500 195.500 1205V1207" stroke="#e0e0e0" stroke-width="1.200"/><path d="M196 1224L208 1212.500Q209.500 1211.500 210.500 1212.500Q211.500 1213.500 210.500 1215L199 1227" stroke="#e0e0e0" stroke-width="1.400"/><path d="M196 1224C193 1224.500 193.500 1228 190.500 1229.500C194 1230.500 198 1230 199 1227Z" fill="#3a96dd"/></svg>
<div class="mi" style="top:1216.500px">图片颜色选项(<u>C</u>)<span style="letter-spacing:-1px">...</span></div>
<svg width="100" height="110" viewBox="155 88 100 110" style="left:155px;top:88px" fill="none"><ellipse cx="199.200" cy="142.300" rx="37.400" ry="47" stroke="#ff1f12" stroke-width="5"/></svg>
<svg width="200" height="60" viewBox="170 1142 200 60" style="left:170px;top:1142px" fill="none"><ellipse cx="267.700" cy="1171" rx="89" ry="22.300" stroke="#ff1f12" stroke-width="4.400"/></svg>
</body>
</html>
